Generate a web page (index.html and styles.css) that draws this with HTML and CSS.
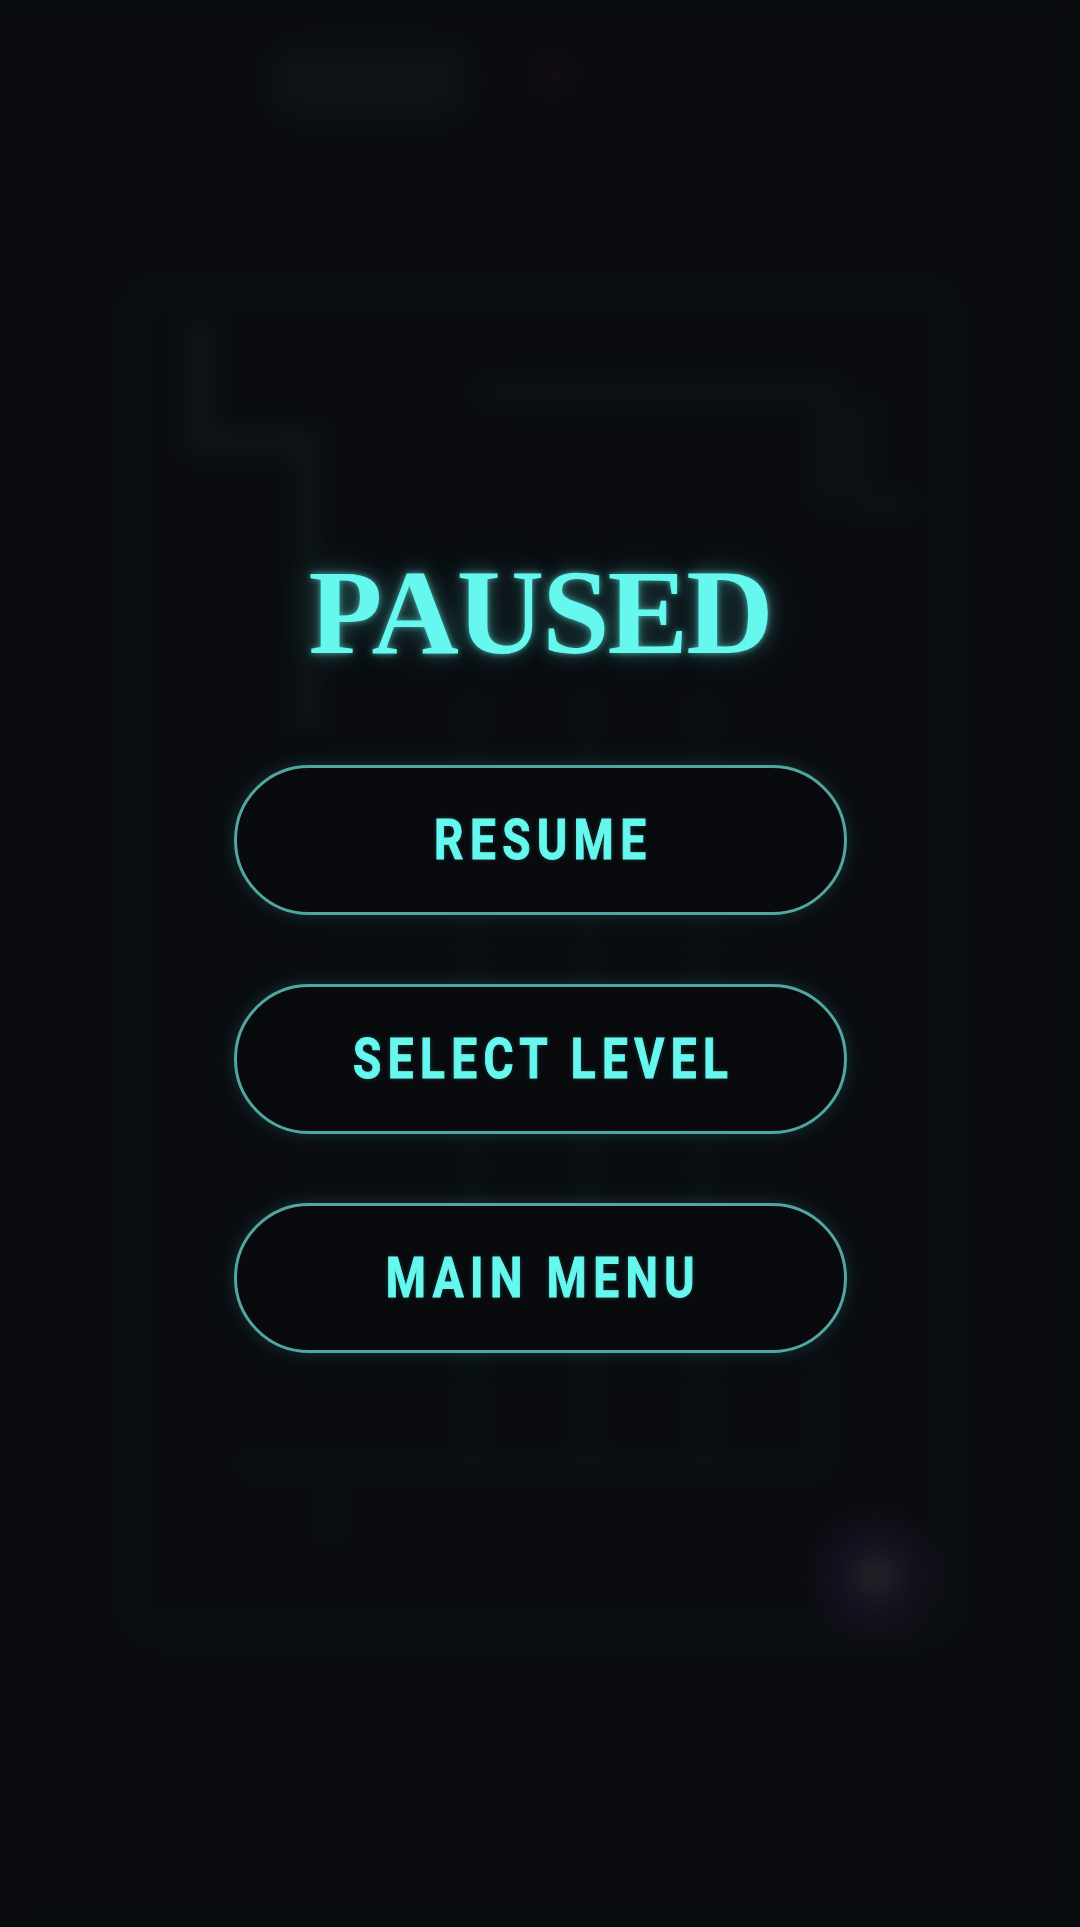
FILE: index.html
```html
<!DOCTYPE html>
<html lang="en">
<head>
<meta charset="utf-8">
<title>Paused</title>
<link rel="stylesheet" href="styles.css">
</head>
<body>
<div class="scene" aria-hidden="true">
  <svg class="maze" width="1080" height="1927" viewBox="0 0 1080 1927" xmlns="http://www.w3.org/2000/svg">
    <rect width="1080" height="1927" fill="#0a0c10"/>
    <rect x="272" y="44" width="196" height="74" rx="26" fill="#0d1216"/>
    <rect x="134" y="292" width="814" height="1340" rx="26" fill="none" stroke="#0c1013" stroke-width="18"/>
    <path d="M200 318 V442 H308 V730" fill="none" stroke="#0e1518" stroke-width="24"/>
    <path d="M482 392 H828 V505" fill="none" stroke="#0c1215" stroke-width="24"/>
    <path d="M862 400 V505 H912" fill="none" stroke="#0c1215" stroke-width="20"/>
    <path d="M473 700 V1470 M588 700 V1470 M703 700 V1470" fill="none" stroke="#0c1215" stroke-width="16"/>
    <path d="M243 1466 H818" fill="none" stroke="#0c1114" stroke-width="16"/>
    <path d="M330 1470 V1540 M820 1300 V1466" fill="none" stroke="#0b1013" stroke-width="16"/>
  </svg>
  <div class="spark spark-red"></div>
  <div class="spark spark-violet"></div>
</div>

<main class="menu">
  <h1 class="title">PAUSED</h1>
  <div class="buttons">
    <button class="btn" type="button"><span class="label">RESUME</span></button>
    <button class="btn" type="button"><span class="label">SELECT LEVEL</span></button>
    <button class="btn" type="button"><span class="label">MAIN MENU</span></button>
  </div>
</main>
</body>
</html>
```
FILE: styles.css
```css
html, body {
  margin: 0;
  padding: 0;
}

body {
  width: 1080px;
  height: 1927px;
  background: #0a0c10;
  overflow: hidden;
  position: relative;
  font-family: "Roboto", "DejaVu Sans", sans-serif;
}

.scene {
  position: absolute;
  inset: 0;
  z-index: 0;
  pointer-events: none;
  overflow: hidden;
}

.maze {
  display: block;
  filter: blur(11px);
}

.spark {
  position: absolute;
  border-radius: 50%;
}

.spark-red {
  left: 518px;
  top: 39px;
  width: 70px;
  height: 70px;
  background: radial-gradient(circle, rgba(60, 18, 30, 0.16) 0%, rgba(60, 18, 30, 0) 70%);
}

.spark-violet {
  left: 800px;
  top: 1500px;
  width: 152px;
  height: 152px;
  background: radial-gradient(circle, rgba(40, 38, 44, 0.8) 0%, rgba(30, 20, 45, 0.5) 35%, rgba(20, 14, 32, 0) 70%);
}

.menu {
  position: relative;
  z-index: 1;
  display: flex;
  flex-direction: column;
  align-items: center;
  padding-top: 552px;
}

.title {
  margin: 0;
  font-family: "Liberation Serif", "Times New Roman", serif;
  font-weight: 700;
  font-size: 121px;
  line-height: 121px;
  letter-spacing: -2px;
  color: #66f7ee;
  text-shadow:
    0 0 6px rgba(102, 247, 238, 0.6),
    0 0 20px rgba(102, 247, 238, 0.32),
    0 0 50px rgba(102, 247, 238, 0.14);
}

.buttons {
  margin-top: 92px;
  display: flex;
  flex-direction: column;
  gap: 69px;
}

.btn {
  width: 613px;
  height: 150px;
  box-sizing: border-box;
  border: 3px solid #52a6a1;
  border-radius: 75px;
  background: rgba(8, 10, 13, 0.88);
  box-shadow:
    0 0 16px rgba(80, 200, 195, 0.16),
    0 0 40px rgba(80, 200, 195, 0.06);
  display: flex;
  align-items: center;
  justify-content: center;
  padding: 0;
  cursor: pointer;
}

.label {
  display: inline-block;
  font-family: "Roboto", "DejaVu Sans", sans-serif;
  font-weight: 700;
  font-size: 56px;
  line-height: 1;
  letter-spacing: 0.14em;
  padding-left: 0.14em;
  color: #66f7ee;
  -webkit-text-stroke: 1px #66f7ee;
  transform: scaleX(0.82);
  text-shadow: 0 0 6px rgba(102, 247, 238, 0.25);
}
```
